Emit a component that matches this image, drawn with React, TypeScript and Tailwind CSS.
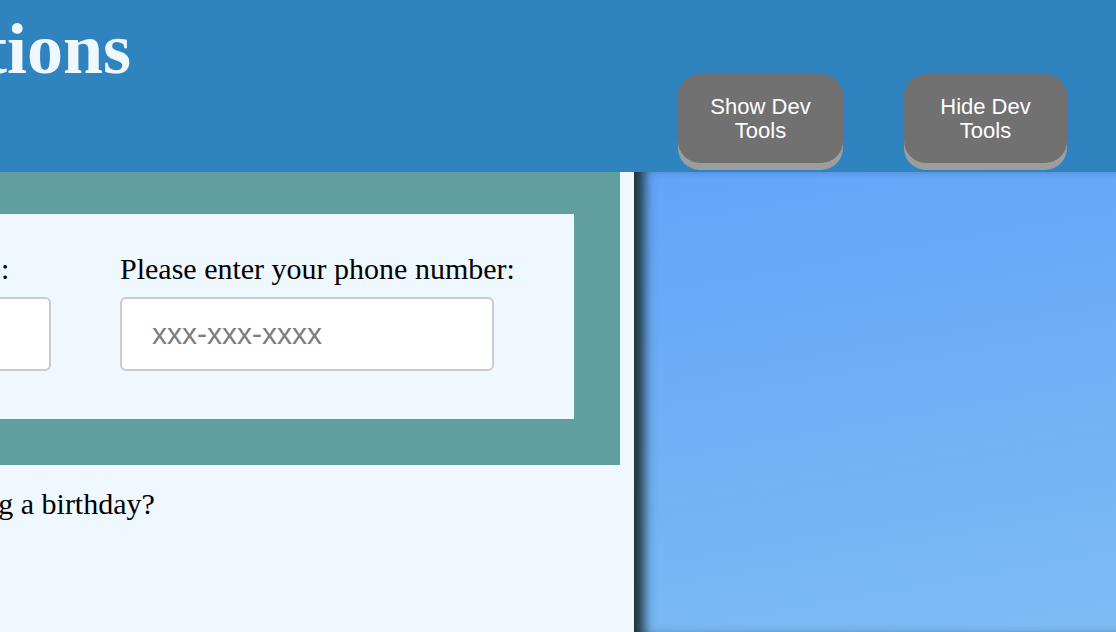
import React from "react";

const serif = { fontFamily: '"Liberation Serif", "Times New Roman", serif' };

interface FieldProps {
  label: string;
  placeholder: string;
  width: string;
}

const Field: React.FC<FieldProps> = ({ label, placeholder, width }) => (
  <div className={`flex flex-col ${width}`}>
    <label style={serif} className="text-[30px] text-black whitespace-nowrap">{label}</label>
    <input
      placeholder={placeholder}
      className="mt-[6px] h-[74px] w-full bg-white border-2 border-[#cbcbcb] rounded-[6px] pl-[30px] text-[30px] font-['Liberation_Sans',Arial,sans-serif] placeholder:text-[#7d7d7d] outline-none"
    />
  </div>
);

const DevButton: React.FC<{ label: string; width: string }> = ({ label, width }) => (
  <button
    className={`${width} h-[89px] rounded-[22px] bg-[#717171] text-white text-[22px] leading-[24px] px-7 shadow-[0_7px_0_#9d9d9d] font-['Liberation_Sans',Arial,sans-serif]`}
  >
    {label}
  </button>
);

export default function App() {
  return (
    <div className="h-screen w-full overflow-hidden bg-[#f0f8ff]">
      <div className="ml-[-400px] w-[1516px] h-full flex flex-col">
        <header className="h-[172px] shrink-0 bg-[#2f83bf] flex justify-between">
          <div className="w-[531px] flex justify-end">
            <h1 style={serif} className="pt-[13px] text-[72px] leading-none font-bold text-[#f0f8ff] whitespace-nowrap">
              Reservations
            </h1>
          </div>
          <div className="flex gap-[61px] pt-[74px] pr-[49px]">
            <DevButton label="Show Dev Tools" width="w-[165px]" />
            <DevButton label="Hide Dev Tools" width="w-[163px]" />
          </div>
        </header>

        <div className="flex flex-1">
          <section className="w-[1034px] shrink-0 pr-[14px]">
            <div className="bg-[#619e9f] pt-[42px] px-[46px] pb-[46px]">
              <div className="bg-[#f0f8ff] flex justify-end gap-[69px] pr-[80px] pt-[32px] pb-[48px]">
                <Field label="Please enter your first name:" placeholder="" width="w-[385px]" />
                <Field label="Please enter your phone number:" placeholder="xxx-xxx-xxxx" width="w-[374px]" />
              </div>
            </div>
            <p style={serif} className="mt-[16px] pl-[175px] text-[30px] text-black">
              Are you celebrating a birthday?
            </p>
          </section>

          <section className="flex-1 bg-[linear-gradient(170deg,#62a4f8,#7dbcf4)] shadow-[inset_16px_0_12px_-6px_#1f3338]" />
        </div>
      </div>
    </div>
  );
}
